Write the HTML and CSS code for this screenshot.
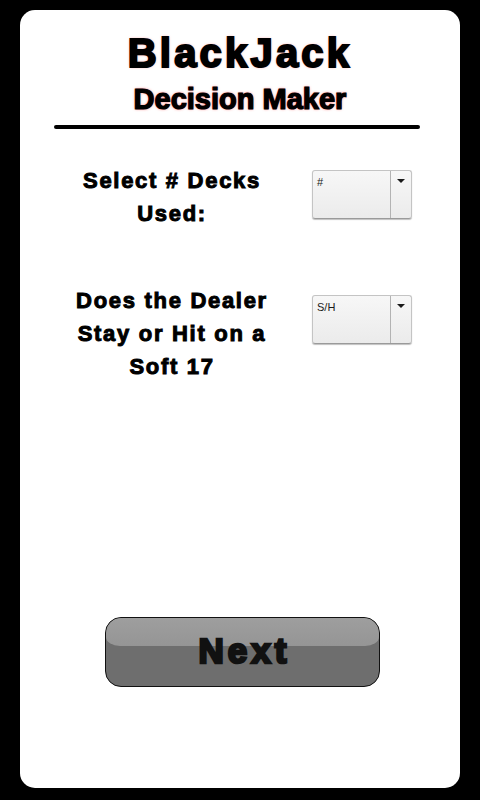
FILE: index.html
```html
<!DOCTYPE html>
<html lang="en">
<head>
<meta charset="utf-8">
<title>BlackJack Decision Maker</title>
<link rel="stylesheet" href="styles.css">
</head>
<body>
<main class="card">
  <header class="header">
    <h1 class="title">BlackJack</h1>
    <h2 class="subtitle">Decision Maker</h2>
  </header>
  <div class="rule"></div>
  <section class="form">
    <div class="row row-decks">
      <div class="label">Select # Decks<br>Used:</div>
      <div class="dropdown">
        <span class="dropdown-value">#</span>
        <span class="dropdown-arrow"><span class="triangle"></span></span>
      </div>
    </div>
    <div class="row row-soft">
      <div class="label">Does the Dealer<br>Stay or Hit on a<br>Soft 17</div>
      <div class="dropdown">
        <span class="dropdown-value">S/H</span>
        <span class="dropdown-arrow"><span class="triangle"></span></span>
      </div>
    </div>
  </section>
  <button class="next-btn" type="button"><span class="next-text">Next</span></button>
</main>
</body>
</html>
```
FILE: styles.css
```css
html, body {
  margin: 0;
  padding: 0;
}
body {
  background: #000;
  width: 480px;
  height: 800px;
  overflow: hidden;
  font-family: "Liberation Sans", Arial, sans-serif;
}
.card {
  box-sizing: border-box;
  margin: 10px 20px 0 20px;
  height: 778px;
  background: #fff;
  border-radius: 15px;
  padding-top: 21px;
  display: flex;
  flex-direction: column;
}
.header {
  text-align: center;
}
.title {
  margin: 0;
  font-size: 40px;
  line-height: 44px;
  font-weight: bold;
  letter-spacing: 3.2px;
  color: #000;
  -webkit-text-stroke: 2px #000;
  text-shadow: 0 0 1px #f00, 0 0 3px rgba(255, 70, 70, 0.8);
}
.subtitle {
  margin: 8px 0 0 0;
  font-size: 29px;
  line-height: 32px;
  font-weight: bold;
  color: #000;
  -webkit-text-stroke: 1.2px #000;
  text-shadow: 0 0 1px #f00, 0 0 3px rgba(255, 70, 70, 0.8);
}
.rule {
  height: 4px;
  margin: 10px 40px 0 34px;
  background: #000;
  border-radius: 2px;
}
.form {
  padding-left: 42px;
}
.row {
  display: flex;
  align-items: flex-start;
}
.row-decks {
  margin-top: 35px;
}
.row-soft {
  margin-top: 54px;
}
.label {
  width: 220px;
  text-align: center;
  font-size: 22px;
  line-height: 33px;
  font-weight: bold;
  letter-spacing: 1.7px;
  color: #000;
  -webkit-text-stroke: 1px #000;
}
.dropdown {
  box-sizing: border-box;
  margin-left: 30px;
  width: 100px;
  height: 49px;
  display: flex;
  border: 1px solid #c4c4c4;
  border-bottom-color: #9a9a9a;
  border-radius: 3px;
  background: linear-gradient(#f7f7f7, #ebebeb);
  box-shadow: 0 1px 1px rgba(0, 0, 0, 0.25);
}
.row-decks .dropdown {
  margin-top: 6px;
}
.row-soft .dropdown {
  margin-top: 11px;
}
.dropdown-value {
  flex: 1;
  padding: 5px 4px;
  font-size: 11px;
  line-height: 13px;
  color: #1a1a1a;
}
.dropdown-arrow {
  width: 20px;
  border-left: 1px solid #b3b3b3;
  display: flex;
  justify-content: center;
  align-items: flex-start;
  padding-top: 8px;
}
.triangle {
  width: 0;
  height: 0;
  border-left: 4px solid transparent;
  border-right: 4px solid transparent;
  border-top: 4px solid #1a1a1a;
}
.next-btn {
  position: relative;
  box-sizing: border-box;
  margin: auto 0 101px 85px;
  align-self: flex-start;
  width: 275px;
  height: 70px;
  padding: 0 0 3px 0;
  border: 1px solid #111;
  border-radius: 16px;
  background: #6e6e6e;
  overflow: hidden;
  display: flex;
  align-items: center;
  justify-content: center;
  cursor: pointer;
}
.next-btn::before {
  content: "";
  position: absolute;
  left: 0;
  right: 0;
  top: 0;
  height: 28px;
  background: linear-gradient(#9e9e9e, #959595);
  border-radius: 15px 15px 14px 14px / 15px 15px 9px 9px;
}
.next-text {
  position: relative;
  font-family: "Liberation Sans", Arial, sans-serif;
  font-size: 35px;
  line-height: 35px;
  font-weight: bold;
  letter-spacing: 4px;
  margin-right: -4px;
  color: #111;
  -webkit-text-stroke: 2.6px #111;
}
```
